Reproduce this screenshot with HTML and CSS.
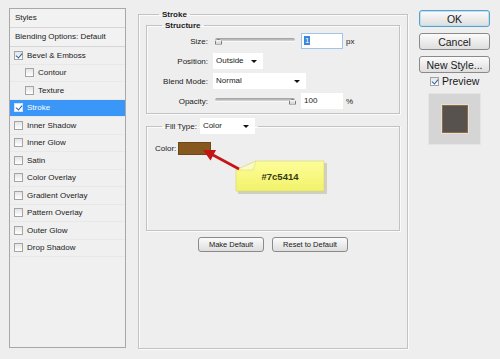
FILE: index.html
```html
<!DOCTYPE html>
<html lang="en">
<head>
    <meta charset="UTF-8" />
    <title>Layer Style - Stroke</title>
    <link rel="stylesheet" href="styles.css">
</head>
<body>
<div class="dialog">

    <div class="styles-list">
        <div class="list-head">Styles</div>
        <div class="list-head">Blending Options: Default</div>
        <div class="item"><span class="box checked"></span>Bevel &amp; Emboss</div>
        <div class="item sub"><span class="box"></span>Contour</div>
        <div class="item sub"><span class="box"></span>Texture</div>
        <div class="item active"><span class="box checked"></span>Stroke</div>
        <div class="item"><span class="box"></span>Inner Shadow</div>
        <div class="item"><span class="box"></span>Inner Glow</div>
        <div class="item"><span class="box"></span>Satin</div>
        <div class="item"><span class="box"></span>Color Overlay</div>
        <div class="item"><span class="box"></span>Gradient Overlay</div>
        <div class="item"><span class="box"></span>Pattern Overlay</div>
        <div class="item"><span class="box"></span>Outer Glow</div>
        <div class="item"><span class="box"></span>Drop Shadow</div>
    </div>

    <fieldset class="group main">
        <legend>Stroke</legend>

        <fieldset class="group structure">
            <legend>Structure</legend>
            <div class="row">
                <span class="lbl">Size:</span>
                <div class="slider"><span class="knob"></span></div>
                <span class="field selected"><span class="sel">1</span></span>
                <span class="unit">px</span>
            </div>
            <div class="row">
                <span class="lbl">Position:</span>
                <span class="dropdown w50">Outside</span>
            </div>
            <div class="row">
                <span class="lbl">Blend Mode:</span>
                <span class="dropdown w93">Normal</span>
            </div>
            <div class="row">
                <span class="lbl">Opacity:</span>
                <div class="slider"><span class="knob end"></span></div>
                <span class="field">100</span>
                <span class="unit">%</span>
            </div>
        </fieldset>

        <fieldset class="group fill">
            <legend><span class="legend-lbl">Fill Type:</span><span class="dropdown w55">Color</span></legend>
            <div class="color-row">
                <span>Color:</span>
                <span class="swatch"></span>
                <svg class="callout" width="190" height="60" viewBox="0 0 190 60">
                    <defs>
                        <linearGradient id="noteFill" x1="0" y1="0" x2="0" y2="1">
                            <stop offset="0" stop-color="#fdfd9a"/>
                            <stop offset="1" stop-color="#f2f26a"/>
                        </linearGradient>
                    </defs>
                    <polygon points="91,30 111,21 180,21 180,52 91,52" fill="#a8a890" opacity="0.45"/>
                    <polygon points="89,28 109,19 177,19 177,49 89,49" fill="url(#noteFill)" stroke="#d6d670" stroke-width="0.6"/>
                    <polygon points="89,28 109,19 106,28" fill="#fafac6" stroke="#d6d670" stroke-width="0.5"/>
                    <line x1="92" y1="27" x2="66" y2="13" stroke="#c41414" stroke-width="2.6"/>
                    <polygon points="56,8 69,8 63.5,18.5" fill="#c41414"/>
                    <text x="133" y="38" text-anchor="middle" class="note-text">#7c5414</text>
                </svg>
            </div>
        </fieldset>

        <div class="defaults">
            <button class="btn small">Make Default</button>
            <button class="btn small">Reset to Default</button>
        </div>
    </fieldset>

    <div class="actions">
        <button class="btn big default">OK</button>
        <button class="btn big">Cancel</button>
        <button class="btn big">New Style...</button>
        <label class="preview-lbl"><span class="box checked"></span>Preview</label>
        <div class="preview"><span class="swatch-preview"></span></div>
    </div>

</div>
</body>
</html>
```

FILE: styles.css
```css
* {
    box-sizing: border-box;
    font-family: 'Liberation Sans', Arial, sans-serif;
}

body {
    margin: 0;
    background: #eeeeee;
    color: #1a1a1a;
    font-size: 8px;
}

.dialog {
    display: flex;
    align-items: flex-start;
    padding: 8px 0 0 9px;
    height: 359px;
}

/* left list of styles */
.styles-list {
    width: 117px;
    height: 340px;
    background: #f0f0f0;
    border: 1px solid #a8a8a8;
}

.list-head {
    height: 19px;
    line-height: 18px;
    padding-left: 5px;
    border-bottom: 1px solid #d6d6d6;
    background: #f2f2f2;
}

.item {
    height: 17.5px;
    display: flex;
    align-items: center;
    padding-left: 4px;
    border-bottom: 1px solid #e8e8e8;
}

.item.sub {
    padding-left: 15px;
}

.item.active {
    background: #3a97f7;
    color: #fff;
}

.box {
    width: 9px;
    height: 9px;
    border: 1px solid #a4a4a4;
    background: linear-gradient(#e4e4e4, #ffffff);
    margin-right: 4px;
    position: relative;
    flex: none;
}

.box.checked::after {
    content: "";
    position: absolute;
    left: 2px;
    top: 0px;
    width: 3px;
    height: 5px;
    border: solid #2d5fa8;
    border-width: 0 1.5px 1.5px 0;
    transform: rotate(40deg);
}

.item.active .box {
    border-color: #cfe3fb;
    background: #ffffff;
}

/* fieldsets */
.group {
    margin: 0;
    border: 1px solid #c2c2c2;
    box-shadow: inset 1px 1px 0 #fbfbfb, 1px 1px 0 #fbfbfb;
}

.group legend {
    font-weight: bold;
    padding: 0 3px;
}

.main {
    width: 270px;
    height: 339px;
    margin: 2px 0 0 12px;
    padding: 2px 7px 0 7px;
}

.main > legend {
    margin-left: 13px;
}

.structure {
    height: 93px;
    padding: 1px 0 0 0;
}

.structure > legend {
    margin-left: 15px;
}

.row {
    display: flex;
    align-items: center;
    height: 20px;
}

.lbl {
    width: 61px;
    text-align: right;
    margin-right: 5px;
}

.slider {
    position: relative;
    width: 80px;
    height: 4px;
    margin: -3px 6px 0 2px;
    border-radius: 2px;
    background: linear-gradient(#9c9c9c, #d8d8d8);
    border-bottom: 1px solid #f8f8f8;
}

.knob {
    position: absolute;
    left: 0;
    top: 1px;
    width: 7px;
    height: 6px;
    background: linear-gradient(#f8f8f8, #cfcfcf);
    border: 1px solid #7d7d7d;
    clip-path: polygon(50% 0, 100% 45%, 100% 100%, 0 100%, 0 45%);
}

.knob.end {
    left: auto;
    right: -1px;
}

.field {
    width: 42px;
    height: 16px;
    line-height: 16px;
    background: #fff;
    padding-left: 3px;
    margin-right: 3px;
}

.field.selected {
    border: 1px solid #9fc5ea;
    line-height: 14px;
    padding-left: 2px;
}

.sel {
    background: #3b86d8;
    color: #fff;
    padding: 0 1px;
}

.dropdown {
    position: relative;
    display: inline-block;
    height: 16px;
    line-height: 16px;
    background: #fff;
    padding-left: 3px;
    font-weight: normal;
}

.dropdown::after {
    content: "";
    position: absolute;
    right: 6px;
    top: 7px;
    border: 3px solid transparent;
    border-top: 3px solid #111;
    border-bottom: 0;
}

.w50 { width: 50px; }
.w93 { width: 93px; }
.w55 { width: 55px; }

.fill {
    margin-top: 4px;
    height: 113px;
    padding: 8px 0 0 0;
}

.fill > legend {
    margin-left: 15px;
    display: flex;
    align-items: center;
    padding: 0 3px;
}

.legend-lbl {
    font-weight: normal;
    margin-right: 3px;
}

.color-row {
    position: relative;
    display: flex;
    align-items: center;
    padding-left: 8px;
}

.color-row span:first-child {
    margin-right: 2px;
}

.swatch {
    width: 33px;
    height: 13px;
    background: #86571f;
    border: 1px solid #6d4717;
}

.callout {
    position: absolute;
    left: 0;
    top: 0;
    overflow: visible;
}

.note-text {
    font-family: 'Liberation Sans', Arial, sans-serif;
    font-size: 9.5px;
    font-weight: bold;
    fill: #333a10;
}

.defaults {
    display: flex;
    justify-content: center;
    gap: 8px;
    margin-top: 6px;
}

/* buttons */
.btn {
    border: 1px solid #8a8a8a;
    border-radius: 3px;
    background: linear-gradient(#fbfbfb, #dedede);
    color: #1a1a1a;
    padding: 0;
    cursor: pointer;
}

.btn.small {
    height: 15px;
    font-size: 7.5px;
}

.btn.small:first-child { width: 66px; }
.btn.small:last-child { width: 76px; }

.actions {
    display: flex;
    flex-direction: column;
    width: 71px;
    margin: 2px 0 0 11px;
}

.btn.big {
    height: 17px;
    margin-bottom: 6px;
    font-size: 10.5px;
}

.btn.default {
    border-color: #5aa0c8;
    box-shadow: inset 0 0 0 1px #bde0f2;
}

.preview-lbl {
    display: flex;
    align-items: center;
    font-size: 10.5px;
    margin: -4px 0 0 11px;
}

.preview-lbl .box {
    margin-right: 3px;
}

.preview {
    width: 53px;
    height: 52px;
    margin: 6px 0 0 9px;
    background: #d5d5d5;
    border: 1px solid #e4e4e4;
    display: flex;
    align-items: center;
    justify-content: center;
}

.swatch-preview {
    width: 26px;
    height: 28px;
    background: #57524e;
    border: 1px solid #8a6c4a;
    box-shadow: 0 0 0 1px #e8e0d2;
}
```
